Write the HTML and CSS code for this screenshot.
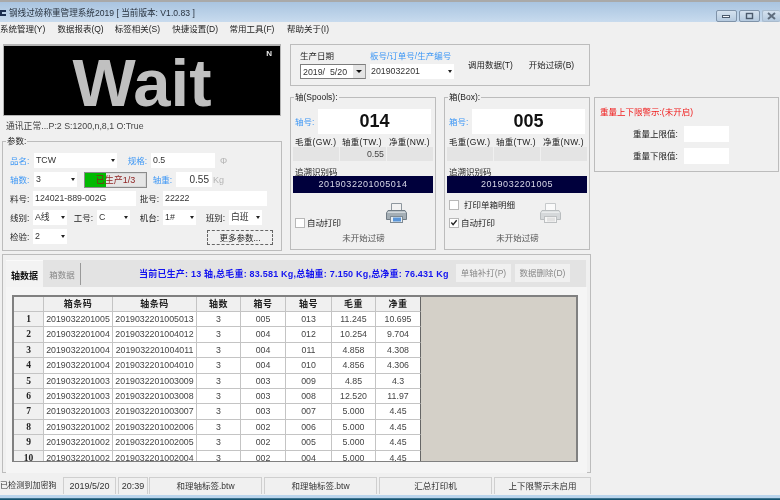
FILE: index.html
```html
<!DOCTYPE html>
<html lang="zh-CN">
<head>
<meta charset="utf-8">
<title>钢线过磅称重管理系统2019</title>
<link rel="stylesheet" href="styles.css">
</head>
<body>
<div class="app">
  <header class="titlebar">
    <svg class="appicon" width="6" height="8" viewBox="0 0 6 8"><path d="M0 1h6v2H2v2h4v2H0z" fill="#1c2f50"/></svg>
    <span class="title">钢线过磅称重管理系统2019 [ 当前版本: V1.0.83 ]</span>
    <div class="winbtns">
      <span class="winbtn min"><svg width="9" height="5" viewBox="0 0 9 5"><rect x="0.5" y="1.5" width="7" height="2" fill="#f4f7fb" stroke="#4b5a6c"/></svg></span>
      <span class="winbtn max"><svg width="9" height="8" viewBox="0 0 9 8"><rect x="1.5" y="1.5" width="6" height="5" fill="none" stroke="#4b5a6c" stroke-width="1.4"/></svg></span>
      <span class="winbtn cls"><svg width="9" height="8" viewBox="0 0 9 8"><path d="M1 1l7 6M8 1L1 7" stroke="#5f6d7d" stroke-width="2"/></svg></span>
    </div>
  </header>
  <nav class="menubar">
    <span>系统管理(Y)</span><span>数据报表(Q)</span><span>标签相关(S)</span><span>快捷设置(D)</span><span>常用工具(F)</span><span>帮助关于(I)</span>
  </nav>

  <div class="top">
    <section class="leftcol">
      <div class="waitbox"><span class="waittext">Wait</span><span class="waitn">N</span></div>
      <div class="comm">通讯正常...P:2 S:1200,n,8,1 O:True</div>
      <div class="group params">
        <div class="legend">参数:</div>
        <div class="prow r1">
          <label class="blue first">品名:</label><div class="combo">TCW</div>
          <label class="blue">规格:</label><div class="input">0.5</div><span class="unit u1">Φ</span>
        </div>
        <div class="prow r2">
          <label class="blue first">轴数:</label><div class="combo">3</div>
          <div class="progress"><span class="fill"></span><span class="ptext">已生产1/3</span></div>
          <label class="blue">轴重:</label><div class="input right">0.55</div><span class="unit u2">Kg</span>
        </div>
        <div class="prow r3">
          <label class="first">料号:</label><div class="input">124021-889-002G</div>
          <label>批号:</label><div class="input">22222</div>
        </div>
        <div class="prow r4">
          <label class="first">线别:</label><div class="combo">A线</div>
          <label>工号:</label><div class="combo">C</div>
          <label>机台:</label><div class="combo">1#</div>
          <label>班别:</label><div class="combo">白班</div>
        </div>
        <div class="prow r5">
          <label class="first">检验:</label><div class="combo">2</div>
          <button class="more">更多参数...</button>
        </div>
      </div>
    </section>

    <section class="midcol">
      <div class="group dategroup">
        <div class="datefield">
          <div class="dlabel">生产日期</div>
          <div class="datepick"><span>2019/&nbsp; 5/20</span><span class="dropbtn"></span></div>
        </div>
        <div class="orderfield">
          <div class="dlabel bluetext">板号/订单号/生产编号</div>
          <div class="combo ordercombo">2019032201</div>
        </div>
        <span class="flatbtn b1">调用数据(T)</span>
        <span class="flatbtn b2">开始过磅(B)</span>
      </div>
      <div class="spools">
        <div class="group unitgroup">
          <div class="legend">轴(Spools):</div>
          <div class="numrow"><label class="blue">轴号:</label><div class="bignum">014</div></div>
          <div class="wlabels"><span>毛重(GW.)</span><span>轴重(TW.)</span><span>净重(NW.)</span></div>
          <div class="wvals"><span></span><span>0.55</span><span></span></div>
          <div class="trace">追溯识别码</div>
          <div class="code">2019032201005014</div>
          <div class="printarea">
            <div class="checks"><div class="chk"><span class="box"></span>自动打印</div></div>
            <svg class="printer" width="21" height="21" viewBox="0 0 21 21">
              <path d="M5.500 9V1.500h10V9" fill="#f2f2f2" stroke="#8e979e"/>
              <path d="M2 8.500h17l1.500 2.500v6.500H.5V11z" fill="#a4aeb5" stroke="#717c85"/>
              <path d="M2 9.500h17l.8 1.500H1.200z" fill="#d2d8dc"/>
              <rect x="4.500" y="14.500" width="12" height="6" fill="#e9eef2" stroke="#7f8a92"/>
              <rect x="7" y="15.500" width="8" height="4" fill="#5a95d8"/>
            </svg>
          </div>
          <div class="state">未开始过磅</div>
        </div>
        <div class="group unitgroup">
          <div class="legend">箱(Box):</div>
          <div class="numrow"><label class="blue">箱号:</label><div class="bignum">005</div></div>
          <div class="wlabels"><span>毛重(GW.)</span><span>轴重(TW.)</span><span>净重(NW.)</span></div>
          <div class="wvals"><span></span><span></span><span></span></div>
          <div class="trace">追溯识别码</div>
          <div class="code">2019032201005</div>
          <div class="printarea">
            <div class="checks">
              <div class="chk"><span class="box"></span><span class="wide">打印单箱明细</span></div>
              <div class="chk"><span class="box"><svg width="9" height="9" viewBox="0 0 9 9"><path d="M1.500 4.500l2 2.500 4-5" fill="none" stroke="#222" stroke-width="1.500"/></svg></span>自动打印</div>
            </div>
            <svg class="printer" width="21" height="21" viewBox="0 0 21 21">
              <path d="M5.500 9V1.500h10V9" fill="#fafafa" stroke="#c6c9cb"/>
              <path d="M2 8.500h17l1.500 2.500v6.500H.5V11z" fill="#d5d8da" stroke="#b9bdbf"/>
              <path d="M2 9.500h17l.8 1.500H1.200z" fill="#e9ebec"/>
              <rect x="4.500" y="14.500" width="12" height="6" fill="#f6f6f6" stroke="#bdc0c2"/>
              <rect x="7" y="15.500" width="8" height="4" fill="#e2e2e2"/>
            </svg>
          </div>
          <div class="state">未开始过磅</div>
        </div>
      </div>
    </section>

    <section class="rightcol">
      <div class="group alarm">
        <div class="alarmtitle">重量上下限警示:(未开启)</div>
        <div class="limit"><label>重量上限值:</label><div class="input"></div></div>
        <div class="limit"><label>重量下限值:</label><div class="input"></div></div>
      </div>
    </section>
  </div>

  <section class="lower">
    <div class="tabstrip">
      <span class="tab active">轴数据</span>
      <span class="tab">箱数据</span>
      <span class="summary">当前已生产: 13 轴,总毛重: 83.581 Kg,总轴重: 7.150 Kg,总净重: 76.431 Kg</span>
      <span class="tbtn tb1">单轴补打(P)</span>
      <span class="tbtn">数据删除(D)</span>
    </div>
    <div class="tabbody">
      <div class="gridframe">
        <div class="datagrid">
          <div class="hd"></div><div class="hd">箱条码</div><div class="hd">轴条码</div><div class="hd">轴数</div><div class="hd">箱号</div><div class="hd">轴号</div><div class="hd">毛重</div><div class="hd">净重</div>
          <div class="rh">1</div><div>2019032201005</div><div>2019032201005013</div><div>3</div><div>005</div><div>013</div><div>11.245</div><div>10.695</div>
          <div class="rh">2</div><div>2019032201004</div><div>2019032201004012</div><div>3</div><div>004</div><div>012</div><div>10.254</div><div>9.704</div>
          <div class="rh">3</div><div>2019032201004</div><div>2019032201004011</div><div>3</div><div>004</div><div>011</div><div>4.858</div><div>4.308</div>
          <div class="rh">4</div><div>2019032201004</div><div>2019032201004010</div><div>3</div><div>004</div><div>010</div><div>4.856</div><div>4.306</div>
          <div class="rh">5</div><div>2019032201003</div><div>2019032201003009</div><div>3</div><div>003</div><div>009</div><div>4.85</div><div>4.3</div>
          <div class="rh">6</div><div>2019032201003</div><div>2019032201003008</div><div>3</div><div>003</div><div>008</div><div>12.520</div><div>11.97</div>
          <div class="rh">7</div><div>2019032201003</div><div>2019032201003007</div><div>3</div><div>003</div><div>007</div><div>5.000</div><div>4.45</div>
          <div class="rh">8</div><div>2019032201002</div><div>2019032201002006</div><div>3</div><div>002</div><div>006</div><div>5.000</div><div>4.45</div>
          <div class="rh">9</div><div>2019032201002</div><div>2019032201002005</div><div>3</div><div>002</div><div>005</div><div>5.000</div><div>4.45</div>
          <div class="rh">10</div><div>2019032201002</div><div>2019032201002004</div><div>3</div><div>002</div><div>004</div><div>5.000</div><div>4.45</div>
        </div>
      </div>
    </div>
  </section>

  <footer class="statusbar">
    <span class="s0">已检测到加密狗</span><span class="s1">2019/5/20</span><span class="s2">20:39</span><span class="s3">和理轴标签.btw</span><span class="s4">和理轴标签.btw</span><span class="s5">汇总打印机</span><span class="s6">上下限警示未启用</span>
  </footer>
  <div class="taskstrip"></div>
</div>
</body>
</html>
```

FILE: styles.css
```css
* { box-sizing: border-box; }
html, body { margin: 0; padding: 0; }
body { width: 780px; height: 500px; overflow: hidden; background: #f0f0f0; }
.app {
  width: 780px; height: 500px; overflow: hidden; display: flex; flex-direction: column;
  background: #f0f0f0; color: #222;
  font: 8.500px/10px "Liberation Sans", "Noto Sans CJK SC", sans-serif;
  filter: blur(0.35px);
}
label { display: block; white-space: nowrap; }
.blue { color: #3d97f5; }
.bluetext { color: #3d97f5; }

/* title + menu */
.titlebar {
  height: 22px; flex: none; display: flex; align-items: center; padding: 2px 0 0 0;
  border-top: 2px solid #a9a9a9;
  background: linear-gradient(#a9c4e0, #c8dbee);
}
.appicon { margin-right: 3px; }
.title { font-size: 8.600px; color: #2a3440; white-space: nowrap; }
.winbtns { margin-left: auto; display: flex; gap: 2px; align-self: flex-start; margin-top: 6px; }
.winbtn {
  width: 21px; height: 12px; display: flex; align-items: center; justify-content: center;
  border: 1px solid #7f93a9; border-radius: 2px; background: linear-gradient(#d5e2ef, #b5cadf);
}
.winbtn.cls { width: 18px; border-right: 0; border-color: #a9bbcd; }
.menubar { height: 14px; flex: none; display: flex; align-items: center; gap: 12px; overflow: hidden; }
.menubar span { white-space: nowrap; width: 45.400px; flex: none; }

/* top area */
.top { height: 218px; flex: none; display: flex; padding-top: 8px; }
.group { border: 1px solid #bcbcbc; }
.legend { width: fit-content; height: 10px; margin: -6px 0 0 3px; padding: 0 1px; background: #f0f0f0; white-space: nowrap; }

.leftcol { width: 285px; flex: none; padding-left: 2px; }
.waitbox {
  width: 278px; height: 72px; margin-left: 1px; border: 1px solid #b4b4b4; border-width: 2px 1px 1px 1px;
  background: #000; display: flex; justify-content: center; position: relative;
}
.waittext { font: bold 67px/67px "Liberation Sans", sans-serif; color: #c0c0c0; margin-top: 3px; height: 67px; }
.waitn { position: absolute; top: 3px; right: 8px; font: bold 8px/10px "Liberation Sans", sans-serif; color: #e8e8e8; }
.comm { height: 25px; padding: 5px 0 0 4px; line-height: 10px; font-size: 8.800px; color: #444; }
.params { width: 280px; height: 110px; }
.prow { display: grid; height: 19px; align-items: center; padding-left: 7px; }
.prow label { justify-self: end; margin-right: 4px; }
.prow label.first { justify-self: start; margin: 0; }
.params .legend + .prow { margin-top: 5px; }
.r1 { grid-template-columns: 24px 83px 34px 64px auto; }
.r2 { grid-template-columns: 24px 43px 70px 29px 36px auto; }
.r3 { grid-template-columns: 23px 103px 27px 104px; }
.r4 { grid-template-columns: 23px 34px 30px 33px 33px 33px 33px 33px; }
.r5 { grid-template-columns: 23px 34px 1fr; }

.input, .combo {
  height: 15px; background: #fff; line-height: 15px; padding-left: 2px; white-space: nowrap; overflow: hidden; color: #333; font-size: 8.800px;
}
.input.right { text-align: right; padding-right: 3px; font-size: 10px; }
.combo { display: flex; align-items: center; }
.combo::after {
  content: ""; margin-left: auto; margin-right: 2px; flex: none;
  border-left: 2.500px solid transparent; border-right: 2.500px solid transparent; border-top: 3px solid #222;
}
.unit { color: #b4b4b4; font-size: 9px; }
.u1 { margin-left: 5px; }
.u2 { margin-left: 1px; }
.progress {
  justify-self: end; width: 63px; height: 16px; position: relative; border: 1px solid #8c8c8c;
  background: #e6e6e6; text-align: center; line-height: 14px; box-shadow: inset 0 0 0 1px #d8d8d8;
}
.fill { position: absolute; left: 0; top: 0; bottom: 0; width: 21px; background: #00b900; }
.ptext { position: relative; color: #8e1f1f; font-size: 9px; }
.more {
  justify-self: end; align-self: start; margin: 3px 8px 0 0; width: 66px; height: 15px; padding: 0;
  font: inherit; color: #222; background: #f0f0f0; border: 1px dashed #666; outline: 0;
}

/* middle */
.midcol { width: 300px; flex: none; margin-left: 5px; }
.dategroup { height: 42px; display: flex; padding: 6px 0 0 9px; }
.dlabel { height: 12px; line-height: 10px; white-space: nowrap; margin-bottom: 1px; }
.datefield { width: 70px; flex: none; }
.datepick {
  width: 66px; height: 15px; border: 1px solid #7d7d7d; border-right-color: #999; background: #fff;
  display: flex; align-items: center; justify-content: space-between; padding-left: 2px; color: #333; font-size: 8.800px;
}
.dropbtn {
  width: 12px; height: 13px; background: #e4e4e4; display: flex; align-items: center; justify-content: center;
}
.dropbtn::after { content: ""; border-left: 3px solid transparent; border-right: 3px solid transparent; border-top: 3px solid #111; }
.orderfield { width: 84px; flex: none; }
.ordercombo { width: 84px; height: 15px; padding-left: 1px; }
.flatbtn { white-space: nowrap; margin-top: 8px; line-height: 12px; height: 12px; }
.b1 { margin-left: 14px; }
.b2 { margin-left: 16px; }

.spools { display: flex; gap: 8px; margin-top: 11px; }
.unitgroup { width: 146px; height: 153px; padding: 0 2px; }
.unitgroup .legend { margin-left: 1px; }
.numrow { display: flex; align-items: center; height: 25px; margin-top: 7px; padding-left: 2px; }
.numrow label { width: 23px; flex: none; }
.bignum { width: 113px; height: 25px; background: #fff; text-align: center; font: bold 18px/25px "Liberation Sans", sans-serif; color: #111; }
.wlabels { display: grid; grid-template-columns: repeat(3, 47px); height: 10px; margin-top: 3px; padding-left: 2px; line-height: 10px; white-space: nowrap; letter-spacing: .3px; }
.wvals { display: grid; grid-template-columns: repeat(3, 46px); column-gap: 1px; }
.wvals span { height: 14px; background: #e4e4e4; text-align: right; padding-right: 2px; line-height: 14px; color: #444; font-size: 8.800px; }
.trace { height: 15px; padding: 6px 0 0 2px; line-height: 10px; }
.code { width: 140px; height: 17px; background: #00003c; color: #d8d8e8; text-align: center; line-height: 17px; font-size: 9px; letter-spacing: .55px; }
.printarea { display: flex; height: 35px; justify-content: space-between; }
.checks { display: flex; flex-direction: column; justify-content: flex-end; padding-left: 2px; }
.chk { display: flex; align-items: center; height: 11px; white-space: nowrap; }
.chk + .chk { margin-top: 7px; }
.box { width: 10px; height: 10px; margin-right: 2px; background: #fff; border: 1px solid #b8b8b8; display: flex; align-items: center; justify-content: center; flex: none; }
.wide { margin-left: 3px; }
.printer { margin: 9px 26px 0 0; flex: none; }
.state { text-align: center; margin-top: 5px; padding-left: 1px; color: #555; }

/* right */
.rightcol { width: 185px; flex: none; margin-left: 4px; padding-top: 53px; }
.alarm { height: 75px; padding: 9px 0 0 5px; }
.alarmtitle { color: #f01818; white-space: nowrap; height: 19px; }
.limit { display: flex; align-items: center; height: 16px; padding-left: 33px; margin-bottom: 6px; }
.limit label { width: 51px; flex: none; }
.limit .input { width: 45px; height: 16px; }

/* lower */
.lower { width: 589px; height: 219px; flex: none; margin-left: 2px; border: 1px solid #bcbcbc; padding: 5px 4px 0 3px; }
.tabstrip { height: 27px; background: #e3e3e3; display: flex; align-items: center; }
.tab { height: 27px; line-height: 30px; width: 37px; flex: none; text-align: center; color: #888; white-space: nowrap; }
.tab.active { background: #f3f3f3; color: #111; font-weight: bold; font-size: 9px; border-top: 1px solid #fafafa; }
.tab + .tab { width: 38px; position: relative; }
.tab + .tab::after { content: ""; position: absolute; right: 0; top: 3px; height: 22px; width: 1px; background: #999; }
.summary { color: #1414f0; font-weight: bold; font-size: 9px; letter-spacing: .21px; margin-left: 58px; white-space: nowrap; width: 317px; flex: none; line-height: 30px; }
.tbtn { width: 55px; height: 18px; flex: none; background: #f0f0f0; color: #888; text-align: center; line-height: 18px; white-space: nowrap; margin-top: -1px; }
.tb1 { margin-right: 4px; }
.tabbody { height: 186px; width: 581px; background: #f5f5f5; padding: 8px 0 0 6px; }
.gridframe {
  width: 566px; height: 167px; overflow: hidden; background: #d4d0c8;
  border: 1px solid #808080; border-width: 2px 2px 1px 2px;
}
.datagrid {
  display: grid; width: fit-content; background: #fff;
  grid-template-columns: 30px 69px 84px 44px 45px 46px 44px 45px;
  grid-template-rows: 15px;
  grid-auto-rows: 15.400px;
  color: #444;
}
.datagrid div { border-right: 1px solid #c4c4c4; border-bottom: 1px solid #c4c4c4; text-align: center; line-height: 15px; white-space: nowrap; overflow: hidden; font-size: 8.800px; }
.datagrid div:nth-child(8n) { border-right: 1px solid #666; }
.datagrid .hd { background: #f0f0f0; font-weight: bold; color: #222; font-size: 9px; letter-spacing: .5px; }
.datagrid .rh { background: #f0f0f0; font: bold 9.500px/15px "Liberation Serif", serif; color: #222; }

/* status */
.statusbar { height: 17px; flex: none; margin-top: 4px; display: flex; line-height: 17px; overflow: hidden; }
.statusbar span { display: block; flex: none; text-align: center; border: 1px solid #cfcfcf; border-bottom: 0; white-space: nowrap; height: 17px; color: #333; }
.statusbar .s0 { width: 61px; border: 0; text-align: left; font-size: 8.100px; }
.statusbar .s1, .statusbar .s2 { font-size: 9px; }
.s1 { width: 53px; margin-left: 2px; }
.s2 { width: 30px; margin-left: 2px; }
.s3 { width: 113px; margin-left: 1px; }
.s4 { width: 113px; margin-left: 2px; }
.s5 { width: 113px; margin-left: 2px; }
.s6 { width: 97px; margin-left: 2px; }
.taskstrip { flex: 1; margin-top: 1px; background: linear-gradient(#b9d4ec 0, #b9d4ec 55%, #14536f 75%, #14536f 100%); }
```
